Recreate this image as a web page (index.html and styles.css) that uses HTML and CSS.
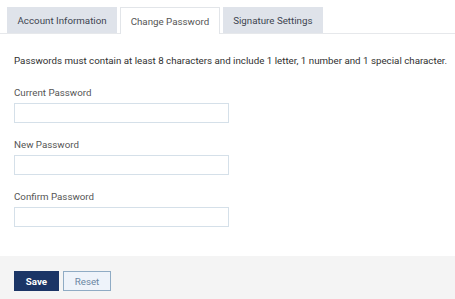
FILE: index.html
```html
<!DOCTYPE html>
<html lang="en">

  <head>
    <meta charset="UTF-8">
    <meta name="viewport" content="width=device-width, initial-scale=1.0">
    <title>Change Password</title>

    <link rel="stylesheet" href="styles.css">
  </head>

  <body>

    <div class="tabs">
      <div class="tab">Account Information</div>
      <div class="tab active">Change Password</div>
      <div class="tab">Signature Settings</div>
    </div>

    <form>
      <div class="content">
        <p class="hint">Passwords must contain at least 8 characters and include 1 letter, 1 number and 1 special character.</p>

        <div class="formField">
          <label for="current-password">Current Password</label>
          <input type="password" name="current-password" id="current-password">
        </div>
        <div class="formField">
          <label for="new-password">New Password</label>
          <input type="password" name="new-password" id="new-password">
        </div>
        <div class="formField">
          <label for="confirm-password">Confirm Password</label>
          <input type="password" name="confirm-password" id="confirm-password">
        </div>
      </div>

      <div class="footer">
        <button type="submit" class="save">Save</button>
        <button type="reset" class="reset">Reset</button>
      </div>
    </form>

  </body>

</html>
```

FILE: styles.css
```css
* {
  margin: 0;
  padding: 0;
  box-sizing: border-box;
}

body {
  height: 100vh;
  font-family: Roboto, "Liberation Sans", sans-serif;
  font-size: 9.75px;
  color: #444;
  background: #fff;
}

.tabs {
  display: flex;
  gap: 3px;
  padding: 7px 0 0 7px;
  border-bottom: 1px solid #e6e8eb;
}

.tab {
  height: 26px;
  padding: 0 9.5px;
  display: flex;
  align-items: center;
  background-color: #dfe3ea;
  color: #3d4450;
  border: 1px solid #dfe3ea;
  border-bottom: none;

  &.active {
    background-color: #fff;
    border-color: #e2e5e9;
    color: #555;
    margin-bottom: -1px;
    height: 27px;
  }
}

form {
  display: flex;
  flex-direction: column;
  height: calc(100vh - 34px);
}

.content {
  flex: 1;
  padding: 19px 6px 0 14px;
  display: flex;
  flex-direction: column;
  gap: 15px;

  & .hint {
    line-height: 16px;
    color: #2f2f2f;
    margin-bottom: 2px;
    white-space: nowrap;
  }

  & .formField {
    display: flex;
    flex-direction: column;
    gap: 3px;
  }

  & label {
    line-height: 14px;
    color: #555;
  }

  & input {
    width: 215px;
    height: 20px;
    border: 1px solid #d5e0e9;
    font: inherit;
    padding: 0 5px;
  }
}

.footer {
  height: 43px;
  background-color: #f4f4f4;
  display: flex;
  gap: 4px;
  padding: 15px 14px 0;

  & button {
    height: 20px;
    font-family: inherit;
    font-size: 9.75px;
    cursor: pointer;
  }

  & .save {
    width: 45px;
    background-color: #1b3566;
    border: 1px solid #1b3566;
    color: #fff;
    font-weight: bold;
  }

  & .reset {
    width: 48px;
    background-color: #eef3fa;
    border: 1px solid #8fabc4;
    color: #6a86a2;
  }
}
```
